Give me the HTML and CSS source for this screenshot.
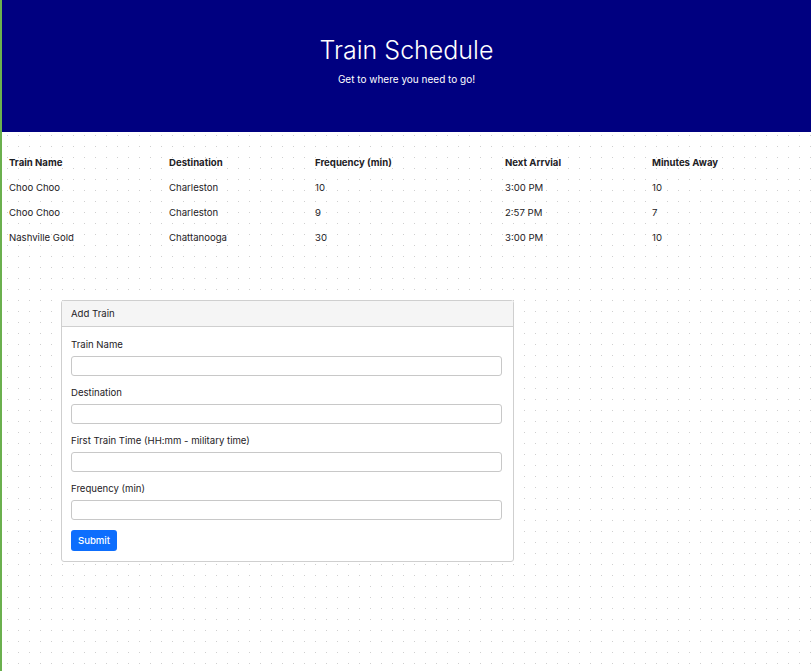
FILE: index.html
```html
<!DOCTYPE html>
<html lang="en">
<head>
<meta charset="utf-8">
<title>Train Schedule</title>
<link rel="stylesheet" href="styles.css">
</head>
<body>
<div class="page">
  <header class="hero">
    <h1 class="hero-title">Train Schedule</h1>
    <p class="hero-sub">Get to where you need to go!</p>
  </header>

  <table class="schedule">
    <colgroup>
      <col class="c1"><col class="c2"><col class="c3"><col class="c4"><col class="c5">
    </colgroup>
    <thead>
      <tr><th>Train Name</th><th>Destination</th><th>Frequency (min)</th><th>Next Arrvial</th><th>Minutes Away</th></tr>
    </thead>
    <tbody>
      <tr><td>Choo Choo</td><td>Charleston</td><td>10</td><td>3:00 PM</td><td>10</td></tr>
      <tr><td>Choo Choo</td><td>Charleston</td><td>9</td><td>2:57 PM</td><td>7</td></tr>
      <tr><td>Nashville Gold</td><td>Chattanooga</td><td>30</td><td>3:00 PM</td><td>10</td></tr>
    </tbody>
  </table>

  <section class="card">
    <div class="card-header">Add Train</div>
    <form class="card-body">
      <div class="field">
        <label class="label">Train Name</label>
        <input class="input" type="text">
      </div>
      <div class="field">
        <label class="label">Destination</label>
        <input class="input" type="text">
      </div>
      <div class="field">
        <label class="label">First Train Time (HH:mm - military time)</label>
        <input class="input" type="text">
      </div>
      <div class="field">
        <label class="label">Frequency (min)</label>
        <input class="input" type="text">
      </div>
      <button class="btn" type="button">Submit</button>
    </form>
  </section>
</div>
</body>
</html>
```

FILE: styles.css
```css
* { box-sizing: border-box; }

html, body {
  margin: 0;
  padding: 0;
}

body {
  font-family: Inter, "Noto Sans", "Liberation Sans", sans-serif;
  color: #1d2125;
  font-size: 10px;
  background-color: #fff;
  background-image: radial-gradient(circle at center, #cfcfcf 0.7px, transparent 1px);
  background-size: 11px 11px;
  background-position: 2px -2px;
  border-left: 2px solid #6bb04e;
  min-height: 671px;
}

.page {
  min-height: 671px;
}

.hero {
  background: #000080;
  color: #fff;
  height: 132px;
  text-align: center;
  padding-top: 34px;
}

.hero-title {
  margin: 0;
  font-weight: 300;
  font-size: 25px;
  line-height: 32px;
}

.hero-sub {
  margin: 6px 0 0;
  font-size: 10px;
  line-height: 15px;
}

.schedule {
  width: 100%;
  border-collapse: collapse;
  table-layout: fixed;
  margin-top: 18px;
}

.c1 { width: 160px; }
.c2 { width: 146px; }
.c3 { width: 190px; }
.c4 { width: 147px; }
.c5 { width: auto; }

.schedule th,
.schedule td {
  text-align: left;
  padding: 5px 7px;
  line-height: 15px;
  font-size: 9.6px;
}

.schedule th {
  font-weight: 700;
}

.card {
  margin: 50px 0 0 59px;
  width: 453px;
  border: 1px solid #cfcfcf;
  border-radius: 3px;
  background: #fff;
}

.card-header {
  background: #f5f5f5;
  border-bottom: 1px solid #cfcfcf;
  height: 26px;
  padding: 0 9px;
  display: flex;
  align-items: center;
  font-size: 9.6px;
}

.card-body {
  padding: 10px 11px 10px 9px;
  display: flex;
  flex-direction: column;
  align-items: flex-start;
}

.field {
  width: 100%;
  display: flex;
  flex-direction: column;
  margin-bottom: 9px;
}

.label {
  font-size: 9.6px;
  line-height: 15px;
  margin-bottom: 4px;
}

.input {
  width: 100%;
  height: 20px;
  border: 1px solid #c8c8c8;
  border-radius: 3px;
  background: #fff;
  padding: 0 6px;
  font: inherit;
}

.btn {
  margin-top: 1px;
  background: #0d6efd;
  color: #fff;
  border: none;
  border-radius: 3px;
  height: 21px;
  width: 46px;
  padding: 0;
  font-family: inherit;
  font-size: 9.6px;
  font-weight: 500;
}
```
